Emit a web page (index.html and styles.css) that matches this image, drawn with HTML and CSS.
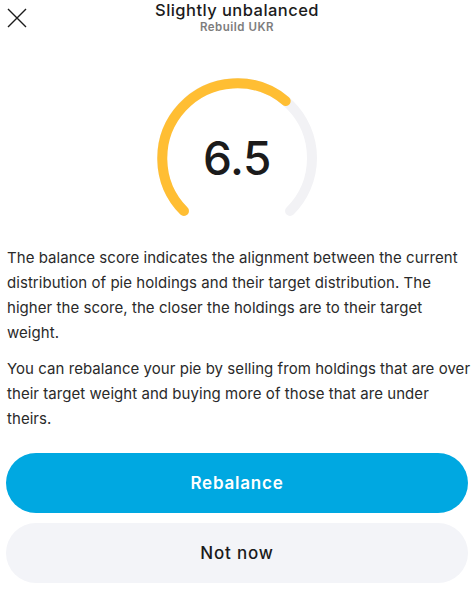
FILE: index.html
```html
<!DOCTYPE html>
<html>
<head>
<meta charset="utf-8">
<link rel="stylesheet" href="styles.css">
</head>
<body>
<div class="sheet">
  <header class="header">
    <button class="close" aria-label="Close">
      <svg width="20" height="20" viewBox="0 0 20 20"><path d="M1 1L19 19M19 1L1 19" stroke="#1b1b1b" stroke-width="1.4" fill="none"/></svg>
    </button>
    <div class="titles">
      <div class="title">Slightly unbalanced</div>
      <div class="subtitle">Rebuild UKR</div>
    </div>
  </header>
  <div class="gauge">
    <svg width="170" height="150" viewBox="0 0 170 150">
      <path d="M31.97 138.03 A75 75 0 1 1 138.03 138.03" stroke="#f2f2f5" stroke-width="10" fill="none" stroke-linecap="round"/>
      <path d="M31.97 138.03 A75 75 0 0 1 133.7 28.0" stroke="#ffbe33" stroke-width="10" fill="none" stroke-linecap="round"/>
    </svg>
    <div class="score">6.5</div>
  </div>
  <div class="body">
    <p>The balance score indicates the alignment between the current distribution of pie holdings and their target distribution. The higher the score, the closer the holdings are to their target weight.</p>
    <p>You can rebalance your pie by selling from holdings that are over their target weight and buying more of those that are under theirs.</p>
  </div>
  <div class="actions">
    <button class="btn primary">Rebalance</button>
    <button class="btn secondary">Not now</button>
  </div>
</div>
</body>
</html>
```
FILE: styles.css
```css
* { box-sizing: border-box; }
html, body { margin: 0; padding: 0; background: #fff; }
body { font-family: "Inter", "Noto Sans", sans-serif; color: #1b1b1b; }
.sheet { width: 474px; height: 599px; padding: 0 6px; display: flex; flex-direction: column; }
.header { position: relative; height: 40px; display: flex; justify-content: center; }
.close { position: absolute; left: 1px; top: 8px; width: 20px; height: 20px; padding: 0; border: 0; background: none; }
.close svg { display: block; }
.titles { text-align: center; padding-top: 0; }
.title { font-size: 16.5px; font-weight: 500; line-height: 20px; letter-spacing: 0.45px; }
.subtitle { font-size: 11.5px; font-weight: 600; color: #7d7d7d; line-height: 14px; letter-spacing: 0.5px; }
.gauge { position: relative; height: 196px; display: flex; justify-content: center; padding-top: 33px; }
.gauge svg { display: block; }
.score { position: absolute; left: 0; right: 0; top: 90px; text-align: center; font-size: 46px; font-weight: 500; line-height: 56px; letter-spacing: -0.5px; }
.body { padding: 9px 0 0 1px; margin-right: -6px; }
.body p { margin: 0 0 11px; font-size: 15px; line-height: 25px; color: #2a2a2a; letter-spacing: 0.05px; }
.actions { margin-top: 11px; display: flex; flex-direction: column; gap: 10px; }
.btn { height: 60px; width: 100%; border: 0; border-radius: 30px; font-family: inherit; font-size: 17px; letter-spacing: 0.8px; }
.primary { background: #00a8e1; color: #fff; font-weight: 600; }
.secondary { background: #f3f4f8; color: #1b1b1b; font-weight: 500; }
```
